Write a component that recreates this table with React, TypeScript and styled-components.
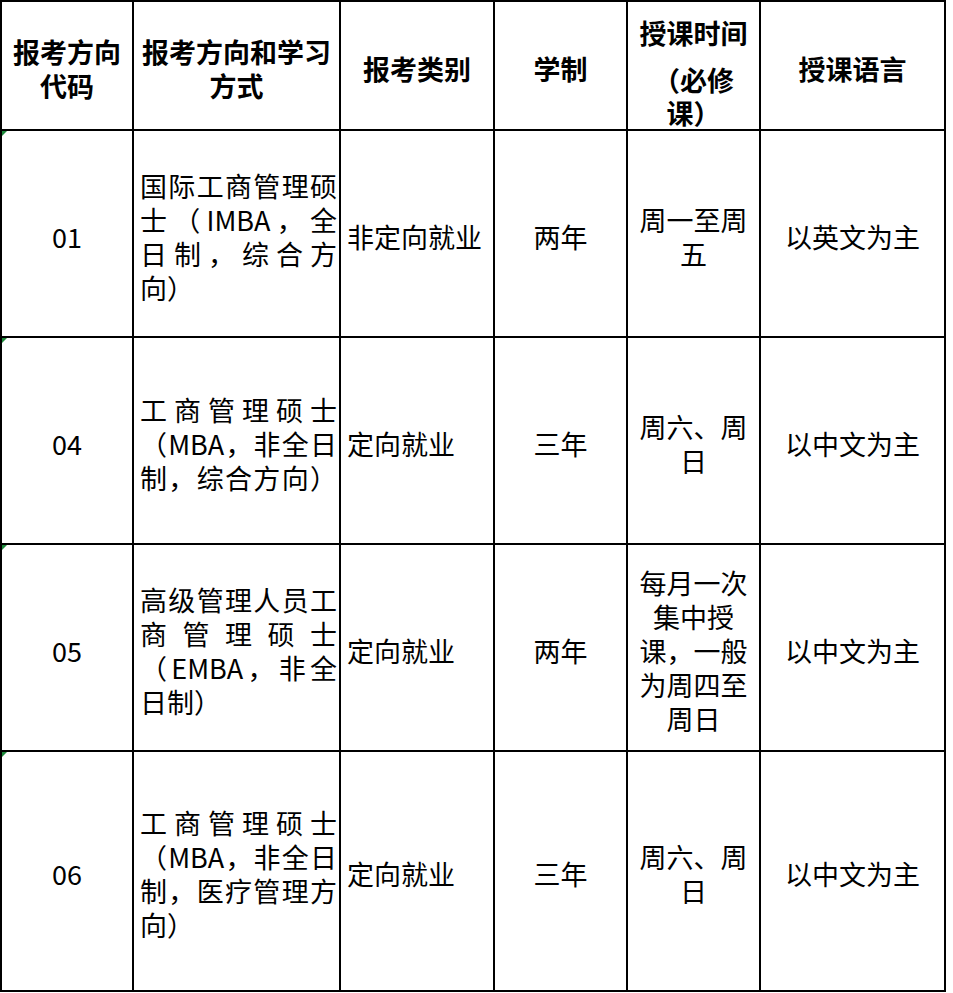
import React from "react";
import styled, { createGlobalStyle } from "styled-components";

const GlobalStyle = createGlobalStyle`
  html, body {
    margin: 0;
    padding: 0;
    background: #ffffff;
  }
  body {
    font-family: "Noto Sans CJK SC", "Noto Sans", sans-serif;
    color: #000000;
  }
`;

const Grid = styled.div`
  display: grid;
  grid-template-columns: 130px 205px 152px 131px 131px 183px;
  grid-template-rows: 127px 205px 205px 205px 238px;
  gap: 2px;
  padding: 2px;
  width: max-content;
  background: #000000;
`;

const Cell = styled.div<{ $align?: "left" | "center"; $head?: boolean; $mark?: boolean }>`
  position: relative;
  background: #ffffff;
  display: flex;
  flex-direction: column;
  justify-content: center;
  align-items: ${(p) => (p.$align === "left" ? "flex-start" : "center")};
  text-align: ${(p) => (p.$align === "left" ? "left" : "center")};
  padding: 6px 0 0;
  padding-left: ${(p) => (p.$align === "left" ? "6px" : "0")};
  font-size: 27px;
  line-height: 34px;
  font-weight: ${(p) => (p.$head ? 700 : 400)};
  box-sizing: border-box;
  overflow: hidden;

  ${(p) =>
    p.$mark &&
    `
    &::before {
      content: "";
      position: absolute;
      top: 0;
      left: 0;
      border-top: 5px solid #1e8a3c;
      border-right: 5px solid transparent;
    }
  `}
`;

const TimeHead = styled(Cell)`
  justify-content: flex-start;
  padding-top: 14px;
  line-height: 33px;
`;

const Sub = styled.div`
  margin-top: 14px;
  padding: 0 6px;
`;

const Wrap = styled.div`
  padding: 0 6px;
`;

const Block = styled.div`
  width: 100%;
  padding-right: 2px;
  box-sizing: border-box;
`;

const Line = styled.span<{ $last?: boolean }>`
  display: block;
  text-align: justify;
  text-align-last: ${(p) => (p.$last ? "left" : "justify")};
  white-space: nowrap;
`;

type Row = {
  code: string;
  lines: string[];
  lastJustified?: boolean;
  kind: string;
  years: string;
  time: string;
  lang: string;
};

const rows: Row[] = [
  {
    code: "01",
    lines: ["国际工商管理硕", "士（IMBA，全", "日制，综合方", "向）"],
    kind: "非定向就业",
    years: "两年",
    time: "周一至周五",
    lang: "以英文为主",
  },
  {
    code: "04",
    lines: ["工商管理硕士", "（MBA，非全日", "制，综合方向）"],
    lastJustified: true,
    kind: "定向就业",
    years: "三年",
    time: "周六、周日",
    lang: "以中文为主",
  },
  {
    code: "05",
    lines: ["高级管理人员工", "商管理硕士", "（EMBA，非全", "日制）"],
    kind: "定向就业",
    years: "两年",
    time: "每月一次集中授课，一般为周四至周日",
    lang: "以中文为主",
  },
  {
    code: "06",
    lines: ["工商管理硕士", "（MBA，非全日", "制，医疗管理方", "向）"],
    kind: "定向就业",
    years: "三年",
    time: "周六、周日",
    lang: "以中文为主",
  },
];

export default function App() {
  return (
    <>
      <GlobalStyle />
      <Grid>
        <Cell $head>
          <Wrap>报考方向代码</Wrap>
        </Cell>
        <Cell $head>报考方向和学习方式</Cell>
        <Cell $head>报考类别</Cell>
        <Cell $head>学制</Cell>
        <TimeHead $head>
          <div>授课时间</div>
          <Sub>（必修课）</Sub>
        </TimeHead>
        <Cell $head>授课语言</Cell>

        {rows.map((r) => (
          <React.Fragment key={r.code}>
            <Cell $mark>{r.code}</Cell>
            <Cell $align="left">
              <Block>
                {r.lines.map((l, i) => (
                  <Line key={i} $last={i === r.lines.length - 1 && !r.lastJustified}>
                    {l}
                  </Line>
                ))}
              </Block>
            </Cell>
            <Cell $align="left">{r.kind}</Cell>
            <Cell>{r.years}</Cell>
            <Cell>
              <Wrap>{r.time}</Wrap>
            </Cell>
            <Cell>{r.lang}</Cell>
          </React.Fragment>
        ))}
      </Grid>
    </>
  );
}
